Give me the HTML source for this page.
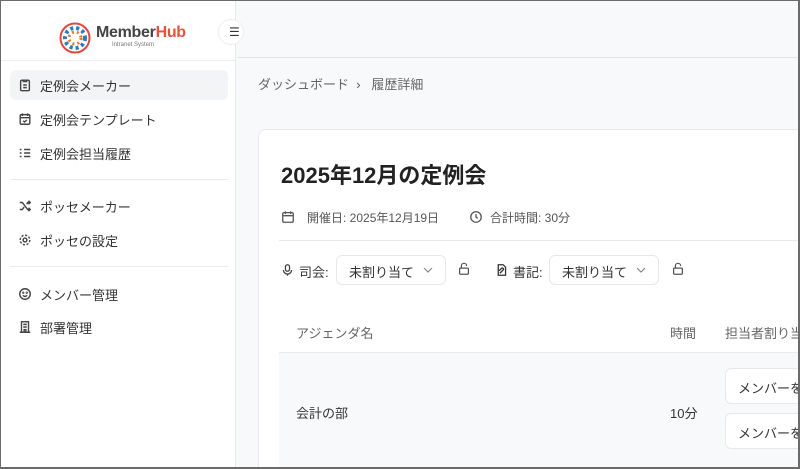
<!DOCTYPE html>
<html style="width:800px;height:469px;overflow:hidden"><head><meta charset="utf-8"><style>
*{box-sizing:border-box;margin:0;padding:0}
body{width:800px;height:469px;overflow:hidden;font-family:"Liberation Sans","Noto Sans CJK JP",sans-serif;background:#f8f9fa;position:relative;color:#222}
.frame{position:absolute;left:0;top:0;width:800px;height:469px;border:1px solid #6b6b6b;border-right-width:2px;border-bottom-width:2px;pointer-events:none;z-index:20}
.side{position:absolute;left:0;top:0;width:236px;height:469px;background:#fff;border-right:1px solid #e5e7eb}
.logo{height:61px;border-bottom:1px solid #eceef0;position:relative}
.nav{position:absolute;left:10px;width:218px;height:30px;display:flex;align-items:center;padding-left:8px;font-size:13px;color:#333;border-radius:6px}
.nav svg{width:14px;height:14px;margin-right:8px;stroke:#444;fill:none;stroke-width:1.6}
.sep{position:absolute;left:10px;width:218px;border-top:1px solid #e9eaec}
.header{position:absolute;left:237px;top:0;width:563px;height:58px;background:#f8f9fa;border-bottom:1px solid #e3e5e8}
.tog{position:absolute;left:218px;top:19px;width:26px;height:26px;border-radius:50%;background:#fff;border:1px solid #eee;z-index:5;font-size:12px;padding-left:10px;line-height:24px;color:#333}
.crumb{position:absolute;left:258px;top:74px;font-size:13px;color:#666}
.card{position:absolute;left:258px;top:129px;width:542px;height:340px;background:#fff;border:1px solid #e6e8eb;border-right:none;border-bottom:none;border-radius:8px 0 0 0;overflow:hidden}
.t{position:absolute;font-size:13px;color:#444;white-space:nowrap}
.sel{position:absolute;height:30px;border:1px solid #e6e8eb;border-radius:6px;background:#fff;font-size:13px;color:#333;padding:6px 0 0 12px;white-space:nowrap}
.sel svg{position:absolute;right:12px;top:11px}
</style></head><body>
<div class="frame"></div>
<div class="side">
 <div class="logo">
  <svg style="position:absolute;left:59px;top:22px" width="32" height="32" viewBox="0 0 32 32"><circle cx="16" cy="16" r="14.5" fill="none" stroke="#e04a3a" stroke-width="2"/><circle cx="16" cy="16" r="10" fill="none" stroke="#2a7bbf" stroke-width="4" stroke-dasharray="3 3"/><circle cx="16" cy="16" r="6" fill="none" stroke="#e8792b" stroke-width="3" stroke-dasharray="2 3"/></svg>
  <div style="position:absolute;left:96px;top:24px;font-size:16px;font-weight:bold;color:#444;letter-spacing:-0.3px">Member<span style="color:#e5533d">Hub</span></div>
  <div style="position:absolute;left:112px;top:42px;font-size:6px;color:#777">Intranet System</div>
 </div>
 <div class="nav" style="top:70px;background:#f3f4f6"><svg viewBox="0 0 16 16"><rect x="3" y="2.5" width="10" height="12" rx="1.5"/><path d="M6 2v2h4V2M6 8h4M6 11h4"/></svg>定例会メーカー</div>
 <div class="nav" style="top:104px"><svg viewBox="0 0 16 16"><rect x="2.5" y="3" width="11" height="11" rx="1.5"/><path d="M5 1.5v3M11 1.5v3M2.5 6.5h11M6 10l1.5 1.5L10 9"/></svg>定例会テンプレート</div>
 <div class="nav" style="top:138px"><svg viewBox="0 0 16 16"><path d="M2 4h2M2 8h2M2 12h2M7 4h7M7 8h7M7 12h7"/></svg>定例会担当履歴</div>
 <div class="sep" style="top:179px"></div>
 <div class="nav" style="top:191px"><svg viewBox="0 0 16 16"><path d="M2 4h3l6 8h3M2 12h3l2-3M10 6l1-2h3M12 2l2 2-2 2M12 10l2 2-2 2"/></svg>ポッセメーカー</div>
 <div class="nav" style="top:225px"><svg viewBox="0 0 16 16"><circle cx="8" cy="8" r="2.2"/><circle cx="8" cy="8" r="5.5" stroke-dasharray="2.5 1.8"/></svg>ポッセの設定</div>
 <div class="sep" style="top:266px"></div>
 <div class="nav" style="top:279px"><svg viewBox="0 0 16 16"><circle cx="8" cy="8" r="6"/><path d="M5.5 9.5q2.5 2.5 5 0"/><circle cx="6" cy="6.5" r=".5"/><circle cx="10" cy="6.5" r=".5"/></svg>メンバー管理</div>
 <div class="nav" style="top:312px"><svg viewBox="0 0 16 16"><rect x="4" y="2" width="8" height="12"/><path d="M2 14h12M6 5h4M6 8h4M7 14v-3h2v3"/></svg>部署管理</div>
</div>
<div class="tog">☰</div>
<div class="header"></div>
<div class="crumb">ダッシュボード &nbsp;<span style="color:#555">›</span>&nbsp;&nbsp; 履歴詳細</div>
<div class="card">
 <div style="position:absolute;left:22px;top:28px;font-size:22px;font-weight:bold;color:#222">2025年12月の定例会</div>
 <svg style="position:absolute;left:22px;top:80px" width="14" height="14" viewBox="0 0 16 16" fill="none" stroke="#555" stroke-width="1.5"><rect x="2" y="3" width="12" height="11" rx="1.5"/><path d="M5 1.5v3M11 1.5v3M2 6.5h12"/></svg>
 <div class="t" style="left:48px;top:79px;font-size:12px;color:#555">開催日: 2025年12月19日</div>
 <svg style="position:absolute;left:210px;top:80px" width="14" height="14" viewBox="0 0 16 16" fill="none" stroke="#555" stroke-width="1.5"><circle cx="8" cy="8" r="6"/><path d="M8 4.5V8l2 1.5"/></svg>
 <div class="t" style="left:231px;top:79px;font-size:12px;color:#555">合計時間: 30分</div>
 <div style="position:absolute;left:20px;right:0;top:110px;border-top:1px solid #e8eaed"></div>
 <svg style="position:absolute;left:22px;top:133px" width="13" height="14" viewBox="0 0 16 16" fill="none" stroke="#444" stroke-width="1.6"><rect x="5.5" y="1.5" width="5" height="8" rx="2.5"/><path d="M3 8a5 5 0 0 0 10 0M8 13v2"/></svg>
 <div class="t" style="left:40px;top:132px;color:#333">司会:</div>
 <div class="sel" style="left:77px;top:125px;width:110px">未割り当て<svg width="10" height="6" viewBox="0 0 10 6" fill="none" stroke="#888" stroke-width="1.2"><path d="M1 1l4 4 4-4"/></svg></div>
 <svg style="position:absolute;left:198px;top:132px" width="14" height="14" viewBox="0 0 16 16" fill="none" stroke="#555" stroke-width="1.4"><rect x="3" y="7" width="10" height="7" rx="1"/><path d="M5 7V4.5a3 3 0 0 1 6 0"/></svg>
 <svg style="position:absolute;left:236px;top:133px" width="13" height="14" viewBox="0 0 16 16" fill="none" stroke="#333" stroke-width="1.6"><path d="M4 1.5h6l3 3v10H4z"/><path d="M6 12l4-4a1.2 1.2 0 0 0-2-2l-3 3"/></svg>
 <div class="t" style="left:254px;top:132px;color:#333">書記:</div>
 <div class="sel" style="left:290px;top:125px;width:110px">未割り当て<svg width="10" height="6" viewBox="0 0 10 6" fill="none" stroke="#888" stroke-width="1.2"><path d="M1 1l4 4 4-4"/></svg></div>
 <svg style="position:absolute;left:412px;top:132px" width="14" height="14" viewBox="0 0 16 16" fill="none" stroke="#555" stroke-width="1.4"><rect x="3" y="7" width="10" height="7" rx="1"/><path d="M5 7V4.5a3 3 0 0 1 6 0"/></svg>
 <div class="t" style="left:37px;top:193px;color:#666">アジェンダ名</div>
 <div class="t" style="left:411px;top:193px;color:#666">時間</div>
 <div class="t" style="left:466px;top:193px;color:#666">担当者割り当て</div>
 <div style="position:absolute;left:20px;right:0;top:222px;height:140px;background:#f8f9fa;border-top:1px solid #e8eaed"></div>
 <div class="t" style="left:37px;top:273px;color:#333">会計の部</div>
 <div class="t" style="left:411px;top:273px;color:#333">10分</div>
 <div class="sel" style="left:466px;top:238px;width:120px;height:36px;padding-top:9px">メンバーを選択</div>
 <div class="sel" style="left:466px;top:283px;width:120px;height:36px;padding-top:9px">メンバーを選択</div>
</div>
</body></html>
